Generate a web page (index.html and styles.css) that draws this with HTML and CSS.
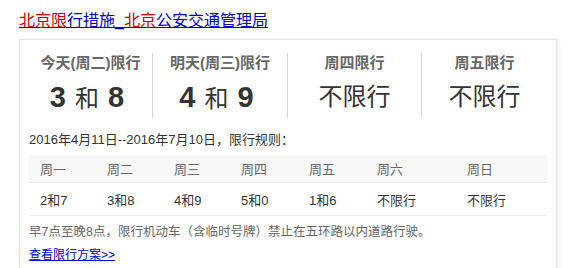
FILE: index.html
```html
<!DOCTYPE html>
<html lang="zh-CN">
<head>
<meta charset="utf-8">
<link rel="stylesheet" href="styles.css">
</head>
<body>
<div class="page">
  <h3 class="title"><a href="#"><em>北京限</em>行措施_<em>北京</em>公安交通管理局</a></h3>
  <div class="card">
    <div class="days">
      <div class="day">
        <div class="label">今天(周二)限行</div>
        <div class="value"><b>3</b><span class="and">和</span><b>8</b></div>
      </div>
      <div class="day">
        <div class="label">明天(周三)限行</div>
        <div class="value"><b>4</b><span class="and">和</span><b>9</b></div>
      </div>
      <div class="day">
        <div class="label">周四限行</div>
        <div class="value free">不限行</div>
      </div>
      <div class="day">
        <div class="label">周五限行</div>
        <div class="value free">不限行</div>
      </div>
    </div>
    <p class="rule">2016年4月11日--2016年7月10日，限行规则：</p>
    <table class="week">
      <thead>
        <tr>
          <th class="c1">周一</th><th class="c2">周二</th><th class="c3">周三</th><th class="c4">周四</th><th class="c5">周五</th><th class="c6">周六</th><th>周日</th>
        </tr>
      </thead>
      <tbody>
        <tr>
          <td>2和7</td><td>3和8</td><td>4和9</td><td>5和0</td><td>1和6</td><td>不限行</td><td>不限行</td>
        </tr>
      </tbody>
    </table>
    <p class="note">早7点至晚8点，限行机动车（含临时号牌）禁止在五环路以内道路行驶。</p>
    <a class="more" href="#">查看限行方案&gt;&gt;</a>
  </div>
</div>
</body>
</html>
```
FILE: styles.css
```css
html, body {
  margin: 0;
  padding: 0;
  background: #fff;
}
body {
  font-family: "Liberation Sans", Arial, "Noto Sans CJK SC", sans-serif;
  color: #333;
}
.page {
  padding: 10px 0 0 19px;
}
.title {
  margin: 0 0 7px;
  font-size: 16px;
  font-weight: normal;
  line-height: 22px;
}
.title a {
  color: #0000cc;
  text-decoration: underline;
}
.title em {
  font-style: normal;
  color: #cc0000;
}
.card {
  width: 518px;
  padding: 13px 9px 20px 9px;
  border: 1px solid #e3e3e3;
  box-shadow: 2px 0 3px rgba(0, 0, 0, 0.07);
}
.days {
  display: grid;
  grid-template-columns: 124px 135px 134px 1fr;
}
.day {
  height: 65px;
  text-align: center;
  border-right: 1px solid #d8d8d8;
}
.day:last-child {
  border-right: 0;
}
.label {
  font-size: 15px;
  font-weight: bold;
  color: #666;
  line-height: 20px;
}
.value {
  margin-top: 8px;
  line-height: 32px;
  font-size: 24px;
  color: #333;
}
.value b {
  font-size: 29px;
  font-weight: bold;
}
.value .and {
  margin: 0 9px;
  font-weight: normal;
}
.value b:last-child {
  margin-right: 7px;
}
.value.free {
  font-weight: normal;
}
.rule {
  margin: 12px 0 5px;
  font-size: 13px;
  line-height: 20px;
  color: #333;
}
.week {
  width: 518px;
  border-collapse: collapse;
  table-layout: fixed;
  font-size: 13px;
}
.week th, .week td {
  padding: 0 0 0 11px;
  text-align: left;
}
.week th {
  height: 27px;
  background: #f8f8f8;
  color: #666;
  font-weight: normal;
  border-bottom: 1px solid #eee;
}
.week td {
  height: 32px;
  color: #333;
  border-bottom: 1px solid #eee;
}
.c1, .c2, .c3 { width: 56px; }
.c4, .c5 { width: 57px; }
.c6 { width: 79px; }
.note {
  margin: 6px 0 3px;
  font-size: 12.5px;
  line-height: 20px;
  color: #666;
}
.more {
  display: inline-block;
  font-size: 12px;
  line-height: 20px;
  color: #0000cc;
  text-decoration: underline;
}
```
